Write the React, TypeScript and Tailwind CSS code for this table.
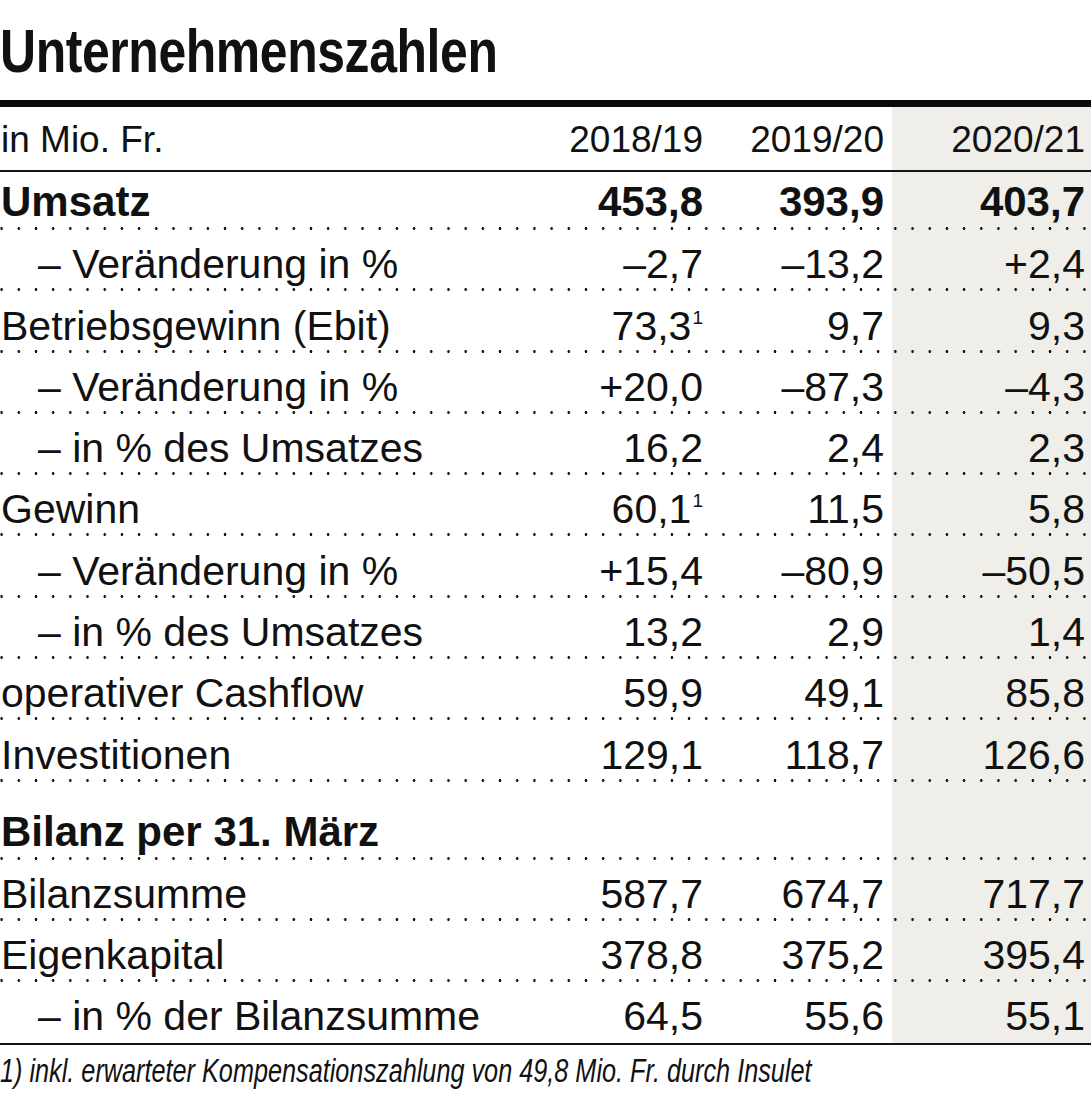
type Line = {
  label: string;
  values?: [string, string, string];
  bold?: boolean;
  indent?: boolean;
  sup?: boolean;
  h: string;
  last?: boolean;
};

const lines: Line[] = [
  { label: 'Umsatz', values: ['453,8', '393,9', '403,7'], bold: true, h: 'h-[58px]' },
  { label: '– Veränderung in %', values: ['–2,7', '–13,2', '+2,4'], indent: true, h: 'h-[61.3px]' },
  { label: 'Betriebsgewinn (Ebit)', values: ['73,3', '9,7', '9,3'], sup: true, h: 'h-[61.3px]' },
  { label: '– Veränderung in %', values: ['+20,0', '–87,3', '–4,3'], indent: true, h: 'h-[61.3px]' },
  { label: '– in % des Umsatzes', values: ['16,2', '2,4', '2,3'], indent: true, h: 'h-[61.3px]' },
  { label: 'Gewinn', values: ['60,1', '11,5', '5,8'], sup: true, h: 'h-[61.3px]' },
  { label: '– Veränderung in %', values: ['+15,4', '–80,9', '–50,5'], indent: true, h: 'h-[61.3px]' },
  { label: '– in % des Umsatzes', values: ['13,2', '2,9', '1,4'], indent: true, h: 'h-[61.3px]' },
  { label: 'operativer Cashflow', values: ['59,9', '49,1', '85,8'], h: 'h-[61.3px]' },
  { label: 'Investitionen', values: ['129,1', '118,7', '126,6'], h: 'h-[61.3px]' },
  { label: 'Bilanz per 31. März', bold: true, h: 'h-[78px]' },
  { label: 'Bilanzsumme', values: ['587,7', '674,7', '717,7'], h: 'h-[61px]' },
  { label: 'Eigenkapital', values: ['378,8', '375,2', '395,4'], h: 'h-[61px]' },
  { label: '– in % der Bilanzsumme', values: ['64,5', '55,6', '55,1'], indent: true, h: 'h-[63px]', last: true },
];

// dotted rule under every row (overlay on the row's bottom edge)
const dots =
  "relative after:absolute after:left-0 after:right-0 after:bottom-0 after:h-[3px] after:bg-[radial-gradient(circle,#111_1.1px,transparent_1.6px)] after:bg-[length:17.2px_3px] after:bg-[position:-7px_0]";

function Row({ line }: { line: Line }) {
  const weight = line.bold ? 'font-bold text-[42px] pb-[7px]' : 'font-normal text-[41px] pb-[6px]';
  return (
    <div
      className={`grid grid-cols-[520px_193px_179px_199px] ${line.h} ${
        line.last ? 'border-b-2 border-[#161616]' : dots
      }`}
    >
      <div className={`flex items-end leading-none ${weight} ${line.indent ? 'pl-[38px]' : 'pl-[1px]'}`}>
        {line.label}
      </div>
      {[0, 1, 2].map((i) => (
        <div
          key={i}
          className={`flex items-end justify-end leading-none ${weight} ${
            i === 0 ? 'pr-[10px]' : i === 1 ? 'pr-[8px]' : 'pr-[6px] bg-[#efeee9]'
          }`}
        >
          {line.values ? (
            <span className="flex items-start">
              {line.values[i]}
              {line.sup && i === 0 && <span className="text-[19px] leading-none mt-[2px] ml-[1px]">1</span>}
            </span>
          ) : null}
        </div>
      ))}
    </div>
  );
}

export default function App() {
  return (
    <div className="w-[1091px] bg-white text-[#111] font-['Liberation_Sans',Arial,sans-serif]">
      {/* Title */}
      <div className="h-[100px] pt-[20px]">
        <h1 className="inline-block origin-left scale-x-[0.805] text-[62px] leading-[62px] font-bold tracking-[-0.5px] whitespace-nowrap">
          Unternehmenszahlen
        </h1>
      </div>
      <div className="h-[7px] bg-[#0b0b0b]" />

      {/* Header */}
      <div className="grid grid-cols-[520px_193px_179px_199px] h-[65px] border-b-2 border-[#161616] text-[37px] leading-none">
        <div className="flex items-end pb-[12px] pl-[1px]">in Mio. Fr.</div>
        <div className="flex items-end justify-end pb-[12px] pr-[10px]">2018/19</div>
        <div className="flex items-end justify-end pb-[12px] pr-[8px]">2019/20</div>
        <div className="flex items-end justify-end pb-[12px] pr-[6px] bg-[#efeee9]">2020/21</div>
      </div>

      {lines.map((line, idx) => (
        <Row key={idx} line={line} />
      ))}

      {/* Footnote */}
      <div className="pt-[9px]">
        <p className="inline-block origin-left scale-x-[0.765] whitespace-nowrap text-[33px] leading-none italic">
          1) inkl. erwarteter Kompensationszahlung von 49,8 Mio. Fr. durch Insulet
        </p>
      </div>
    </div>
  );
}
